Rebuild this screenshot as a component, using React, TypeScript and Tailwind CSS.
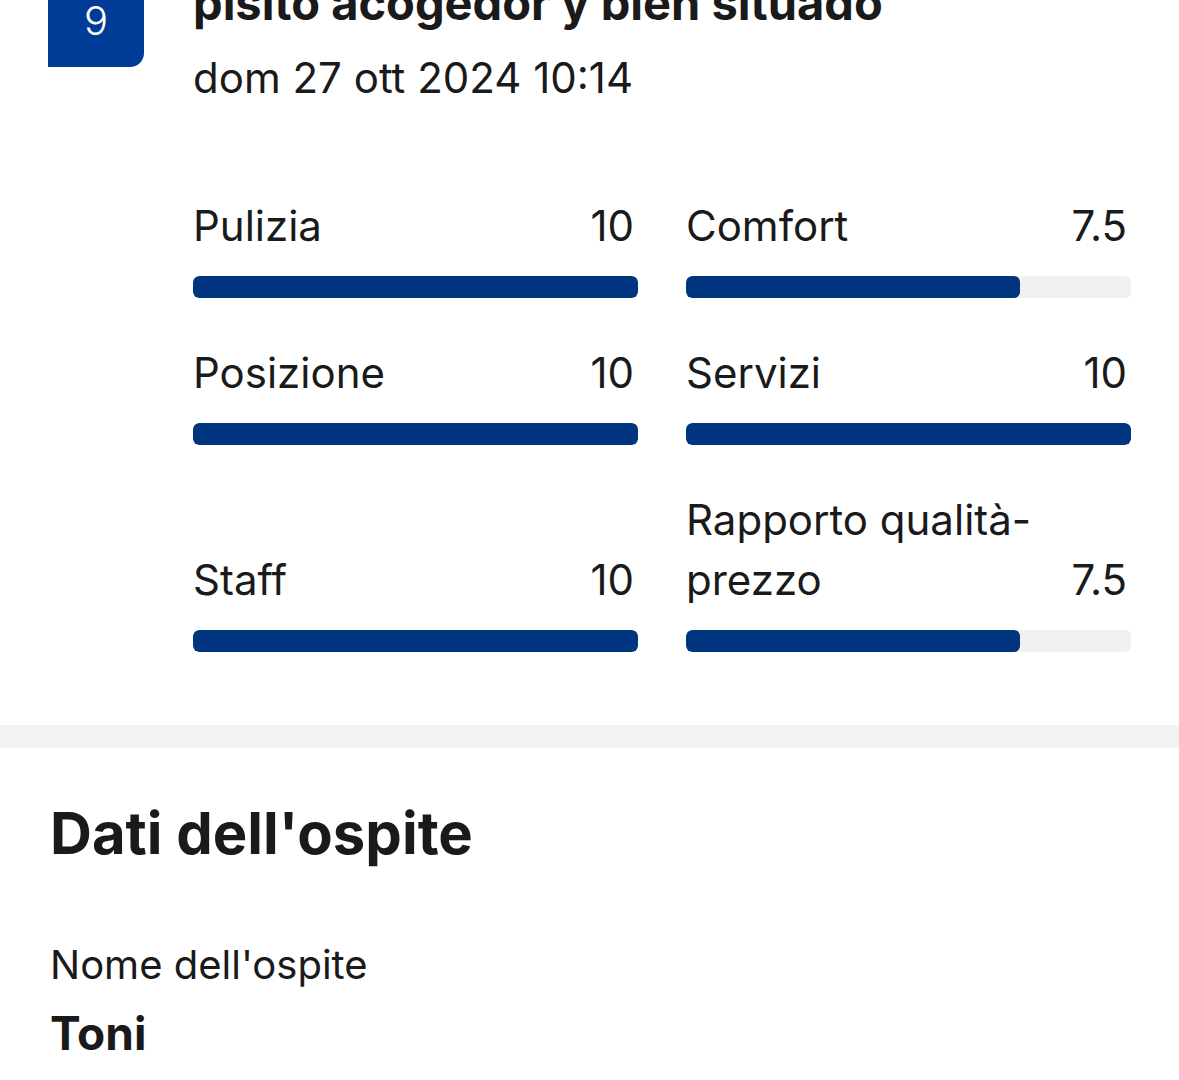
import React from 'react';

interface RatingProps {
    label: string;
    value: number;
}

const ratings: RatingProps[] = [
    { label: 'Pulizia', value: 10 },
    { label: 'Comfort', value: 7.5 },
    { label: 'Posizione', value: 10 },
    { label: 'Servizi', value: 10 },
    { label: 'Staff', value: 10 },
    { label: 'Rapporto qualità-prezzo', value: 7.5 },
];

const RatingBar = ({ label, value }: RatingProps) => {
    const pct = (value / 10) * 100;
    return (
        <div className="flex flex-col justify-end">
            <div className="flex items-end justify-between gap-4 text-[42px] leading-[60px] text-[#1a1a1a]">
                <span>{label}</span>
                <span className="pr-[4px]">{value}</span>
            </div>
            <div className="mt-[20px] h-[22px] w-full overflow-hidden rounded-[6px] bg-[#f1f1f1]">
                <div className="h-full rounded-[6px] bg-[#003580]" style={{ width: `${pct}%` }} />
            </div>
        </div>
    );
};

export default function App() {
    return (
        <div className="min-h-screen overflow-hidden bg-white" style={{ fontFamily: 'Inter, "Noto Sans", sans-serif' }}>
            <div className="-mt-[28px] flex gap-[49px] px-[48px]">
                <div className="flex h-[95px] w-[96px] shrink-0 items-center justify-center rounded-t-[14px] rounded-br-[14px] bg-[#003b95] pt-[2px] text-[40px] font-light text-white">
                    9
                </div>
                <div className="flex-1 pt-[3px]">
                    <h2 className="whitespace-nowrap text-[47px] font-bold leading-[56px] text-[#1a1a1a]">pisito acogedor y bien situado</h2>
                    <p className="mt-[19px] text-[42px] leading-[56px] text-[#1a1a1a]">dom 27 ott 2024 10:14</p>
                    <div className="mt-[90px] grid grid-cols-2 gap-x-[48px] gap-y-[45px]">
                        {ratings.map((r) => (
                            <RatingBar key={r.label} {...r} />
                        ))}
                    </div>
                </div>
            </div>
            <div className="mt-[73px] h-[23px] bg-[#f2f2f2]" />
            <div className="px-[50px] pt-[50px] text-[#1a1a1a]">
                <h3 className="text-[58px] font-bold leading-[70px]">Dati dell'ospite</h3>
                <p className="mt-[72px] text-[40px] leading-[50px]">Nome dell'ospite</p>
                <p className="mt-[15px] text-[46px] font-bold leading-[56px]">Toni</p>
            </div>
        </div>
    );
}
